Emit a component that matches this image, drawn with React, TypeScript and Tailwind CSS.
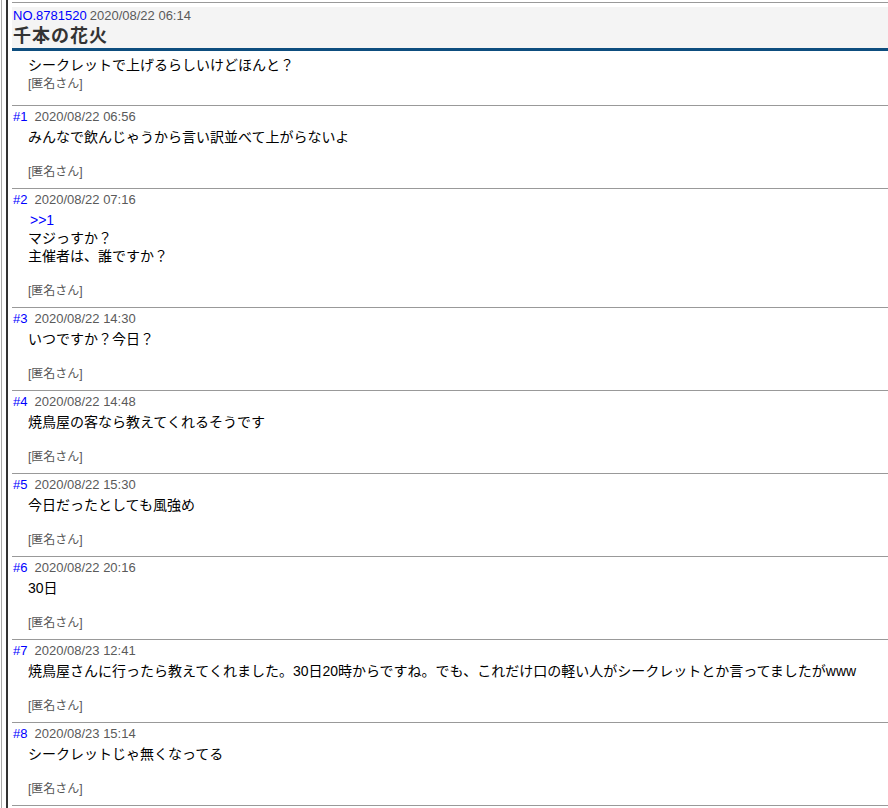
import React from 'react'

type Post = {
  no: number
  date: string
  lines: { text: string; link?: boolean }[]
}

const posts: Post[] = [
  { no: 1, date: '2020/08/22 06:56', lines: [{ text: 'みんなで飲んじゃうから言い訳並べて上がらないよ' }] },
  {
    no: 2,
    date: '2020/08/22 07:16',
    lines: [{ text: '>>1', link: true }, { text: 'マジっすか？' }, { text: '主催者は、誰ですか？' }],
  },
  { no: 3, date: '2020/08/22 14:30', lines: [{ text: 'いつですか？今日？' }] },
  { no: 4, date: '2020/08/22 14:48', lines: [{ text: '焼鳥屋の客なら教えてくれるそうです' }] },
  { no: 5, date: '2020/08/22 15:30', lines: [{ text: '今日だったとしても風強め' }] },
  { no: 6, date: '2020/08/22 20:16', lines: [{ text: '30日' }] },
  {
    no: 7,
    date: '2020/08/23 12:41',
    lines: [
      {
        text: '焼鳥屋さんに行ったら教えてくれました。30日20時からですね。でも、これだけ口の軽い人がシークレットとか言ってましたがwww',
      },
    ],
  },
  { no: 8, date: '2020/08/23 15:14', lines: [{ text: 'シークレットじゃ無くなってる' }] },
]

const jp = "font-['Liberation_Sans','Noto_Sans_CJK_JP',sans-serif]"

function Reply({ post }: { post: Post }) {
  return (
    <div className="border-t border-[#999] pt-[2px] pb-[8px]">
      {/* header: number + date */}
      <div className="flex items-center pl-[1px] text-[13px] leading-[18px]">
        <span className="text-[#0000ff]">#{post.no}</span>
        <span className="ml-[7px] text-[#5a5a5a]">{post.date}</span>
      </div>
      {/* body */}
      <div className="mt-[2px] pl-[16px] text-[14px] leading-[18px] text-black whitespace-nowrap">
        {post.lines.map((line, i) => (
          <div key={i} className={line.link ? 'pl-[2px] text-[#0000ff]' : ''}>
            {line.text}
          </div>
        ))}
        <div className="h-[18px]" />
      </div>
      <div className="pl-[16px] text-[12px] leading-[16px] text-[#555]">[匿名さん]</div>
    </div>
  )
}

export default function App() {
  return (
    <div className={`flex min-h-screen bg-white ${jp}`}>
      {/* left frame lines */}
      <div className="ml-[1px] border-l border-[#aaa] pl-[4px]">
        <div className="h-full border-l-2 border-[#333]" />
      </div>
      <div className="flex-1 min-w-0 pl-[4px] overflow-hidden">
        {/* thread head */}
        <div className="mt-[2px] border-t border-[#999] pt-[4px]">
          <div className="h-[41px] bg-[#f4f4f4] pl-[1px] pt-[1px]">
            <div className="flex items-center text-[13px] leading-[16px]">
              <span className="text-[#0000ff]">NO.8781520</span>
              <span className="ml-[3px] text-[#5a5a5a]">2020/08/22 06:14</span>
            </div>
            <div className="mt-[1px] text-[18px] leading-[23px] font-bold tracking-[1px] text-[#333]">千本の花火</div>
          </div>
          <div className="h-[3px] bg-[#0d4d7e]" />
          <div className="pt-[5px] pb-[13px] pl-[16px]">
            <div className="text-[14px] leading-[18px] text-black">シークレットで上げるらしいけどほんと？</div>
            <div className="mt-[2px] text-[12px] leading-[16px] text-[#555]">[匿名さん]</div>
          </div>
        </div>
        {posts.map((p) => (
          <Reply key={p.no} post={p} />
        ))}
        <div className="border-t border-[#999]" />
      </div>
    </div>
  )
}
